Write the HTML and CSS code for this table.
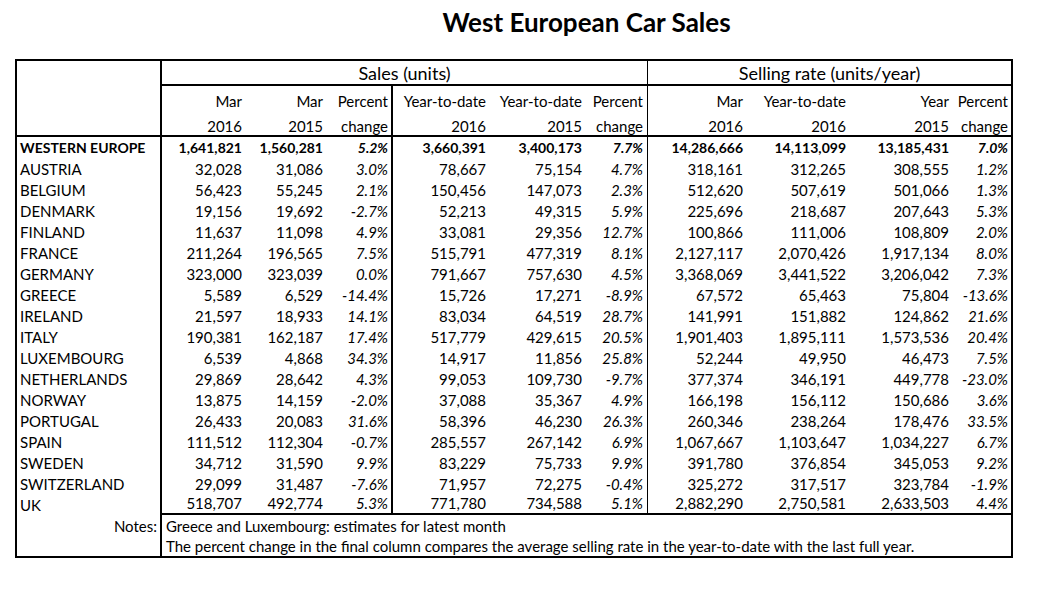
FILE: index.html
```html
<!DOCTYPE html>
<html lang="en">
<head>
<meta charset="utf-8">
<title>West European Car Sales</title>
<link rel="stylesheet" href="styles.css">
</head>
<body>
<div class="page">
  <h1 class="title">West European Car Sales</h1>
  <div class="sheet">
    <div class="cell corner"></div>
    <div class="cell group sales">Sales (units)</div>
    <div class="cell group rate">Selling rate (units/year)</div>

    <div class="row head">
      <div class="cell">Mar</div><div class="cell">Mar</div><div class="cell">Percent</div>
      <div class="cell">Year-to-date</div><div class="cell">Year-to-date</div><div class="cell">Percent</div>
      <div class="cell">Mar</div><div class="cell">Year-to-date</div><div class="cell">Year</div><div class="cell">Percent</div>
    </div>
    <div class="row head sub">
      <div class="cell">2016</div><div class="cell">2015</div><div class="cell">change</div>
      <div class="cell">2016</div><div class="cell">2015</div><div class="cell">change</div>
      <div class="cell">2016</div><div class="cell">2016</div><div class="cell">2015</div><div class="cell">change</div>
    </div>

    <div class="row data total"><div class="cell">WESTERN EUROPE</div><div class="cell">1,641,821</div><div class="cell">1,560,281</div><div class="cell">5.2%</div><div class="cell">3,660,391</div><div class="cell">3,400,173</div><div class="cell">7.7%</div><div class="cell">14,286,666</div><div class="cell">14,113,099</div><div class="cell">13,185,431</div><div class="cell">7.0%</div></div>
    <div class="row data"><div class="cell">AUSTRIA</div><div class="cell">32,028</div><div class="cell">31,086</div><div class="cell">3.0%</div><div class="cell">78,667</div><div class="cell">75,154</div><div class="cell">4.7%</div><div class="cell">318,161</div><div class="cell">312,265</div><div class="cell">308,555</div><div class="cell">1.2%</div></div>
    <div class="row data"><div class="cell">BELGIUM</div><div class="cell">56,423</div><div class="cell">55,245</div><div class="cell">2.1%</div><div class="cell">150,456</div><div class="cell">147,073</div><div class="cell">2.3%</div><div class="cell">512,620</div><div class="cell">507,619</div><div class="cell">501,066</div><div class="cell">1.3%</div></div>
    <div class="row data"><div class="cell">DENMARK</div><div class="cell">19,156</div><div class="cell">19,692</div><div class="cell">-2.7%</div><div class="cell">52,213</div><div class="cell">49,315</div><div class="cell">5.9%</div><div class="cell">225,696</div><div class="cell">218,687</div><div class="cell">207,643</div><div class="cell">5.3%</div></div>
    <div class="row data"><div class="cell">FINLAND</div><div class="cell">11,637</div><div class="cell">11,098</div><div class="cell">4.9%</div><div class="cell">33,081</div><div class="cell">29,356</div><div class="cell">12.7%</div><div class="cell">100,866</div><div class="cell">111,006</div><div class="cell">108,809</div><div class="cell">2.0%</div></div>
    <div class="row data"><div class="cell">FRANCE</div><div class="cell">211,264</div><div class="cell">196,565</div><div class="cell">7.5%</div><div class="cell">515,791</div><div class="cell">477,319</div><div class="cell">8.1%</div><div class="cell">2,127,117</div><div class="cell">2,070,426</div><div class="cell">1,917,134</div><div class="cell">8.0%</div></div>
    <div class="row data"><div class="cell">GERMANY</div><div class="cell">323,000</div><div class="cell">323,039</div><div class="cell">0.0%</div><div class="cell">791,667</div><div class="cell">757,630</div><div class="cell">4.5%</div><div class="cell">3,368,069</div><div class="cell">3,441,522</div><div class="cell">3,206,042</div><div class="cell">7.3%</div></div>
    <div class="row data"><div class="cell">GREECE</div><div class="cell">5,589</div><div class="cell">6,529</div><div class="cell">-14.4%</div><div class="cell">15,726</div><div class="cell">17,271</div><div class="cell">-8.9%</div><div class="cell">67,572</div><div class="cell">65,463</div><div class="cell">75,804</div><div class="cell">-13.6%</div></div>
    <div class="row data"><div class="cell">IRELAND</div><div class="cell">21,597</div><div class="cell">18,933</div><div class="cell">14.1%</div><div class="cell">83,034</div><div class="cell">64,519</div><div class="cell">28.7%</div><div class="cell">141,991</div><div class="cell">151,882</div><div class="cell">124,862</div><div class="cell">21.6%</div></div>
    <div class="row data"><div class="cell">ITALY</div><div class="cell">190,381</div><div class="cell">162,187</div><div class="cell">17.4%</div><div class="cell">517,779</div><div class="cell">429,615</div><div class="cell">20.5%</div><div class="cell">1,901,403</div><div class="cell">1,895,111</div><div class="cell">1,573,536</div><div class="cell">20.4%</div></div>
    <div class="row data"><div class="cell">LUXEMBOURG</div><div class="cell">6,539</div><div class="cell">4,868</div><div class="cell">34.3%</div><div class="cell">14,917</div><div class="cell">11,856</div><div class="cell">25.8%</div><div class="cell">52,244</div><div class="cell">49,950</div><div class="cell">46,473</div><div class="cell">7.5%</div></div>
    <div class="row data"><div class="cell">NETHERLANDS</div><div class="cell">29,869</div><div class="cell">28,642</div><div class="cell">4.3%</div><div class="cell">99,053</div><div class="cell">109,730</div><div class="cell">-9.7%</div><div class="cell">377,374</div><div class="cell">346,191</div><div class="cell">449,778</div><div class="cell">-23.0%</div></div>
    <div class="row data"><div class="cell">NORWAY</div><div class="cell">13,875</div><div class="cell">14,159</div><div class="cell">-2.0%</div><div class="cell">37,088</div><div class="cell">35,367</div><div class="cell">4.9%</div><div class="cell">166,198</div><div class="cell">156,112</div><div class="cell">150,686</div><div class="cell">3.6%</div></div>
    <div class="row data"><div class="cell">PORTUGAL</div><div class="cell">26,433</div><div class="cell">20,083</div><div class="cell">31.6%</div><div class="cell">58,396</div><div class="cell">46,230</div><div class="cell">26.3%</div><div class="cell">260,346</div><div class="cell">238,264</div><div class="cell">178,476</div><div class="cell">33.5%</div></div>
    <div class="row data"><div class="cell">SPAIN</div><div class="cell">111,512</div><div class="cell">112,304</div><div class="cell">-0.7%</div><div class="cell">285,557</div><div class="cell">267,142</div><div class="cell">6.9%</div><div class="cell">1,067,667</div><div class="cell">1,103,647</div><div class="cell">1,034,227</div><div class="cell">6.7%</div></div>
    <div class="row data"><div class="cell">SWEDEN</div><div class="cell">34,712</div><div class="cell">31,590</div><div class="cell">9.9%</div><div class="cell">83,229</div><div class="cell">75,733</div><div class="cell">9.9%</div><div class="cell">391,780</div><div class="cell">376,854</div><div class="cell">345,053</div><div class="cell">9.2%</div></div>
    <div class="row data"><div class="cell">SWITZERLAND</div><div class="cell">29,099</div><div class="cell">31,487</div><div class="cell">-7.6%</div><div class="cell">71,957</div><div class="cell">72,275</div><div class="cell">-0.4%</div><div class="cell">325,272</div><div class="cell">317,517</div><div class="cell">323,784</div><div class="cell">-1.9%</div></div>
    <div class="row data last"><div class="cell">UK</div><div class="cell">518,707</div><div class="cell">492,774</div><div class="cell">5.3%</div><div class="cell">771,780</div><div class="cell">734,588</div><div class="cell">5.1%</div><div class="cell">2,882,290</div><div class="cell">2,750,581</div><div class="cell">2,633,503</div><div class="cell">4.4%</div></div>

    <div class="row notes">
      <div class="cell label">Notes:</div>
      <div class="cell text">Greece and Luxembourg: estimates for latest month</div>
    </div>
    <div class="row notes">
      <div class="cell label"></div>
      <div class="cell text">The percent change in the final column compares the average selling rate in the year-to-date with the last full year.</div>
    </div>
  </div>
</div>
</body>
</html>
```

FILE: styles.css
```css
html, body {
  margin: 0;
  padding: 0;
  background: #ffffff;
}

body {
  font-family: "Lato", "Open Sans", sans-serif;
  color: #000;
}

.page {
  width: 1062px;
  height: 595px;
}

.title {
  margin: 0 0 0 162px;
  width: 849px;
  height: 59px;
  box-sizing: border-box;
  padding-top: 7px;
  text-align: center;
  font-size: 26px;
  line-height: 30px;
  font-weight: 700;
}

.sheet {
  margin-left: 15px;
  width: fit-content;
  display: grid;
  grid-template-columns: 145px 84px 81px 66px 97px 96px 62px 99px 103px 103px 58px;
  grid-template-rows: 25px 25px 26px repeat(18, 21px) 21px 20px;
  border: 2px solid #000;
  font-size: 15px;
}

.cell {
  box-sizing: border-box;
  display: flex;
  align-items: flex-end;
  justify-content: flex-end;
  padding: 0 4px 1px 4px;
  line-height: 18px;
  white-space: nowrap;
}

.row {
  display: contents;
}

/* header */
.corner {
  grid-row: 1 / span 3;
  border-right: 2px solid #000;
  border-bottom: 2px solid #000;
}

.group {
  justify-content: center;
  border-bottom: 2px solid #000;
  font-size: 18px;
  line-height: 22px;
  padding-bottom: 0;
}

.sales {
  grid-column: span 6;
  border-right: 1px solid #000;
}

.rate {
  grid-column: span 4;
}

.head > :nth-child(3) {
  border-right: 2px solid #000;
  padding-right: 3px;
}

.head > :nth-child(6) {
  border-right: 1px solid #000;
}

.head > :nth-child(10) {
  padding-right: 3px;
}

.head.sub > .cell {
  border-bottom: 2px solid #000;
  padding-bottom: 0;
}

/* data */
.data > :nth-child(1) {
  justify-content: flex-start;
  padding-left: 3px;
  border-right: 2px solid #000;
}

.data > :nth-child(4) {
  border-right: 2px solid #000;
  padding-right: 3px;
  font-style: italic;
}

.data > :nth-child(7) {
  border-right: 1px solid #000;
  font-style: italic;
}

.data > :nth-child(11) {
  padding-right: 3px;
  font-style: italic;
}

.total > .cell {
  font-weight: 700;
  font-size: 14px;
}

.last > .cell:not(:first-child) {
  border-bottom: 2px solid #000;
}

/* notes */
.notes .label {
  padding-right: 3px;
  border-right: 2px solid #000;
}

.notes .text {
  grid-column: span 10;
  justify-content: flex-start;
  padding-left: 4px;
}
```
